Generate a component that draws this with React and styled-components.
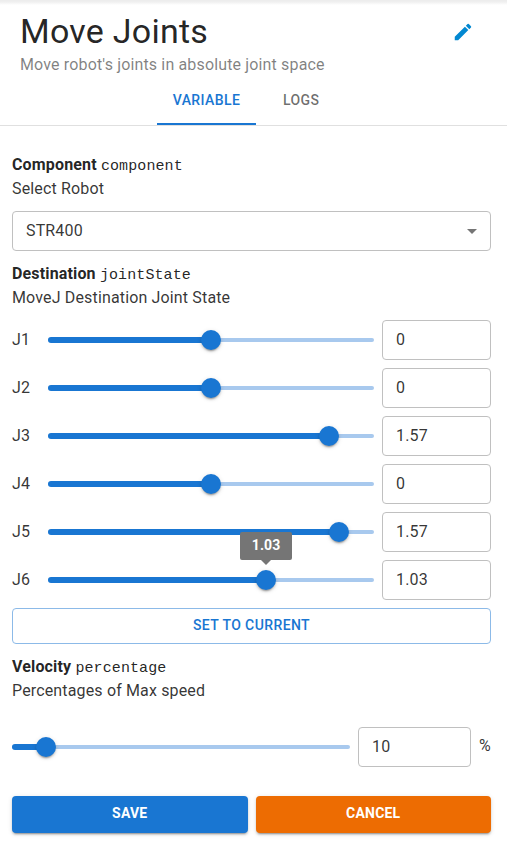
import React from 'react';
import styled, { createGlobalStyle } from 'styled-components';

const GlobalStyle = createGlobalStyle`
  *, *::before, *::after { box-sizing: border-box; }
  body {
    margin: 0;
    background: #fff;
    color: rgba(0, 0, 0, 0.8);
    font-family: Roboto, sans-serif;
    font-size: 16px;
    font-weight: 400;
    line-height: 24px;
    letter-spacing: 0.15px;
  }
  button, input { font: inherit; letter-spacing: inherit; color: inherit; }
`;

const Panel = styled.main`
  height: 846px;
  overflow: hidden;
  background: linear-gradient(#ececec, #f0f0f0 2px, #fff 5px) no-repeat;
`;

const Header = styled.header`
  display: flex;
  justify-content: space-between;
  height: 77px;
  padding: 10px 32px 0 20px;
`;

const Title = styled.h1`
  margin: 0;
  color: rgba(0, 0, 0, 0.87);
  font-size: 34px;
  font-weight: 400;
  line-height: 42px;
  letter-spacing: 0.25px;
`;

const Subtitle = styled.p`
  margin: 1px 0 0;
  color: rgba(0, 0, 0, 0.51);
`;

const EditButton = styled.button`
  display: flex;
  width: 24px;
  height: 24px;
  margin-top: 9px;
  padding: 1px;
  border: 0;
  background: none;
  color: #0288d1;
`;

const Tabs = styled.nav`
  display: flex;
  justify-content: center;
  height: 49px;
  padding-right: 4px;
  border-bottom: 1px solid #e0e0e0;
`;

const Tab = styled.button`
  min-width: 90px;
  height: 48px;
  padding: 0 16px;
  border: 0;
  border-bottom: 2px solid ${({ $active }) => ($active ? '#1976d2' : 'transparent')};
  background: none;
  color: ${({ $active }) => ($active ? '#1976d2' : 'rgba(0, 0, 0, 0.58)')};
  font-size: 14px;
  font-weight: 500;
  letter-spacing: 0.4px;
`;

const Form = styled.div`
  display: flex;
  flex-direction: column;
  padding: 27px 16px 0 12px;
`;

const FieldHeading = styled.div`
  height: 48px;
  margin-top: ${({ $gap }) => $gap || 0}px;
`;

const FieldName = styled.div`
  color: rgba(0, 0, 0, 0.87);
  font-weight: 700;
  letter-spacing: 0.15px;
`;

const FieldKey = styled.code`
  font-family: 'Liberation Mono', monospace;
  font-size: 15px;
  font-weight: 400;
  line-height: 1;
  letter-spacing: 0.1px;
`;

const Select = styled.button`
  display: flex;
  align-items: center;
  justify-content: space-between;
  height: 40px;
  margin-top: 10px;
  padding: 0 6px 0 13px;
  border: 1px solid #c0c0c0;
  border-radius: 4px;
  background: #fff;
  text-align: left;

  svg { color: rgba(0, 0, 0, 0.54); }
`;

const JointList = styled.div`
  display: grid;
  gap: 8px;
  margin-top: 10px;
`;

const JointRow = styled.label`
  display: grid;
  grid-template-columns: 36px 1fr 109px;
  align-items: center;
  height: 40px;
`;

const VelocityRow = styled.label`
  display: grid;
  grid-template-columns: 346px 113px 1fr;
  align-items: center;
  height: 40px;
  margin-top: 24px;
`;

const Unit = styled.span`
  padding: 0 0 2px 8px;
  letter-spacing: 0;
`;

const NumberInput = styled.input`
  width: 100%;
  height: 40px;
  padding: 0 13px 2px;
  border: 1px solid #c0c0c0;
  border-radius: 4px;
  background: #fff;
  outline: 0;
`;

const Track = styled.div`
  position: relative;
  height: 20px;
  margin-right: 8px;

  &::before {
    content: '';
    position: absolute;
    inset: 8px 0;
    border-radius: 4px;
    background: #a8c9ee;
  }
`;

const Fill = styled.div`
  position: absolute;
  top: 7px;
  left: 0;
  height: 6px;
  border-radius: 3px;
  background: #1976d2;
`;

const Thumb = styled.div`
  position: absolute;
  top: 0;
  width: 20px;
  height: 20px;
  margin-left: -10px;
  border-radius: 50%;
  background: #1976d2;
  box-shadow: 0 3px 1px -2px rgba(0, 0, 0, 0.2), 0 2px 2px rgba(0, 0, 0, 0.14), 0 1px 5px rgba(0, 0, 0, 0.12);
`;

const ValueTip = styled.span`
  position: absolute;
  z-index: 1;
  left: -16px;
  top: -38px;
  width: 52px;
  height: 28px;
  border-radius: 2px;
  background: #757575;
  color: #fff;
  font-size: 14px;
  font-weight: 700;
  line-height: 27px;
  text-align: center;

  &::after {
    content: '';
    position: absolute;
    top: 28px;
    left: 20.5px;
    border: 5.5px solid transparent;
    border-top-color: #757575;
    border-bottom: 0;
  }
`;

const Button = styled.button`
  flex: 1;
  height: 37px;
  padding: 0 0 3px;
  border: 0;
  border-radius: 4px;
  background: ${({ $color }) => $color};
  color: #fff;
  font-size: 14px;
  font-weight: 700;
  letter-spacing: 0.2px;
  box-shadow: 0 3px 1px -2px rgba(0, 0, 0, 0.2), 0 2px 2px rgba(0, 0, 0, 0.14), 0 1px 5px rgba(0, 0, 0, 0.12);
`;

const OutlinedButton = styled.button`
  height: 36px;
  margin-top: 8px;
  padding: 0 0 2px;
  border: 1px solid #8cbae8;
  border-radius: 4px;
  background: #fff;
  color: #1976d2;
  font-size: 14px;
  font-weight: 500;
  letter-spacing: 0.4px;
`;

const Actions = styled.div`
  display: flex;
  gap: 8px;
  margin-top: 29px;
`;

const joints = [
  { name: 'J1', value: '0', percent: 50 },
  { name: 'J2', value: '0', percent: 50 },
  { name: 'J3', value: '1.57', percent: 86.2 },
  { name: 'J4', value: '0', percent: 50 },
  { name: 'J5', value: '1.57', percent: 89.3 },
  { name: 'J6', value: '1.03', percent: 66.9, tip: true },
];

function Slider({ percent, tip }) {
  return (
    <Track>
      <Fill style={{ width: `${percent}%` }} />
      <Thumb style={{ left: `${percent}%` }}>{tip && <ValueTip>{tip}</ValueTip>}</Thumb>
    </Track>
  );
}

function Heading({ name, code, description, gap }) {
  return (
    <FieldHeading $gap={gap}>
      <FieldName>{name} <FieldKey>{code}</FieldKey></FieldName>
      <div>{description}</div>
    </FieldHeading>
  );
}

export default function App() {
  return (
    <>
      <GlobalStyle />
      <Panel>
        <Header>
          <div>
            <Title>Move Joints</Title>
            <Subtitle>Move robot's joints in absolute joint space</Subtitle>
          </div>
          <EditButton aria-label="Edit">
            <svg width="24" height="24" viewBox="0 0 24 24" fill="currentColor">
              <path d="M3 17.25V21h3.75L17.81 9.94l-3.75-3.75L3 17.25zM20.71 7.04c.39-.39.39-1.02 0-1.41l-2.34-2.34a.9959.9959 0 0 0-1.41 0l-1.83 1.83 3.75 3.75 1.83-1.83z" />
            </svg>
          </EditButton>
        </Header>
        <Tabs>
          <Tab $active>VARIABLE</Tab>
          <Tab>LOGS</Tab>
        </Tabs>
        <Form>
          <Heading name="Component" code="component" description="Select Robot" />
          <Select>
            STR400
            <svg width="24" height="24" viewBox="0 0 24 24" fill="currentColor"><path d="m7 10 5 5 5-5z" /></svg>
          </Select>
          <Heading name="Destination" code="jointState" description="MoveJ Destination Joint State" gap={11} />
          <JointList>
            {joints.map(({ name, value, percent, tip }) => (
              <JointRow key={name}>
                <span>{name}</span>
                <Slider percent={percent} tip={tip && value} />
                <NumberInput defaultValue={value} />
              </JointRow>
            ))}
          </JointList>
          <OutlinedButton>SET TO CURRENT</OutlinedButton>
          <Heading name="Velocity" code="percentage" description="Percentages of Max speed" gap={11} />
          <VelocityRow>
            <Slider percent={10} />
            <NumberInput defaultValue="10" />
            <Unit>%</Unit>
          </VelocityRow>
          <Actions>
            <Button $color="#1976d2">SAVE</Button>
            <Button $color="#ed6c02">CANCEL</Button>
          </Actions>
        </Form>
      </Panel>
    </>
  );
}
